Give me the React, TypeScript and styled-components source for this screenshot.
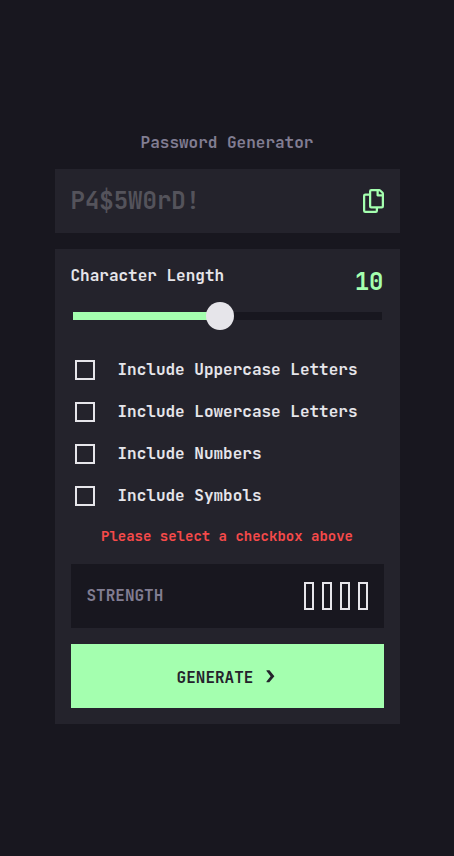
import React, { useState } from "react";
import styled, { createGlobalStyle } from "styled-components";

const colors = {
  page: "#18171f",
  panel: "#24232c",
  muted: "#817d92",
  faint: "#54535b",
  text: "#e6e5ea",
  accent: "#a4ffaf",
  error: "#f64a4a",
};

const MIN_LENGTH = 1;
const MAX_LENGTH = 20;
const THUMB = 28;

const GlobalStyle = createGlobalStyle`
  *, *::before, *::after { box-sizing: border-box; }
  body {
    margin: 0;
    background: ${colors.page};
    color: ${colors.text};
  }
  body, input, button {
    font-family: "JetBrains Mono", "DejaVu Sans Mono", "Liberation Mono", monospace;
    font-size: 16px;
    font-weight: 700;
    line-height: 21px;
  }
`;

const Page = styled.main`
  min-height: 100vh;
  display: flex;
  align-items: center;
  justify-content: center;
  padding: 16px;
`;

const Generator = styled.div`
  width: 100%;
  max-width: 345px;
  display: flex;
  flex-direction: column;
  gap: 16px;
`;

const Title = styled.h1`
  margin: 0;
  font-size: 16px;
  line-height: 21px;
  text-align: center;
  color: ${colors.muted};
`;

const PasswordBar = styled.div`
  display: flex;
  align-items: center;
  gap: 16px;
  height: 64px;
  padding: 0 16px;
  background: ${colors.panel};
`;

const PasswordField = styled.input`
  flex: 1;
  min-width: 0;
  height: 32px;
  padding: 0;
  border: 0;
  outline: 0;
  background: transparent;
  color: ${colors.text};
  font-size: 24px;
  line-height: 32px;

  &::placeholder {
    color: ${colors.faint};
    opacity: 1;
  }
`;

const CopyButton = styled.button`
  display: flex;
  padding: 0;
  border: 0;
  background: transparent;
  color: ${colors.accent};
  cursor: pointer;
`;

const Settings = styled.form`
  display: flex;
  flex-direction: column;
  padding: 16px;
  background: ${colors.panel};
`;

const LengthHeader = styled.div`
  display: flex;
  justify-content: space-between;
  align-items: flex-start;
`;

const LengthValue = styled.output`
  font-size: 24px;
  line-height: 34px;
  color: ${colors.accent};
`;

const Slider = styled.input`
  appearance: none;
  height: 8px;
  margin: 13px 2px 39px;
  cursor: pointer;
  background: linear-gradient(
    to right,
    ${colors.accent} var(--fill),
    ${colors.page} var(--fill)
  );

  &::-webkit-slider-thumb {
    appearance: none;
    width: ${THUMB}px;
    height: ${THUMB}px;
    border-radius: 50%;
    background: ${colors.text};
  }
  &::-moz-range-thumb {
    width: ${THUMB}px;
    height: ${THUMB}px;
    border: 0;
    border-radius: 50%;
    background: ${colors.text};
  }
`;

const Options = styled.div`
  display: flex;
  flex-direction: column;
  gap: 20px;
`;

const Option = styled.label`
  display: flex;
  align-items: center;
  gap: 23px;
  height: 22px;
  padding-left: 4px;
  line-height: 22px;
  cursor: pointer;
`;

const Checkbox = styled.input`
  appearance: none;
  flex: none;
  display: grid;
  place-items: center;
  width: 20px;
  height: 20px;
  margin: 0;
  border: 2px solid ${colors.text};
  cursor: pointer;

  &:checked {
    border-color: ${colors.accent};
    background: ${colors.accent};
  }
  &:checked::before {
    content: "";
    width: 6px;
    height: 11px;
    border: solid ${colors.page};
    border-width: 0 2px 2px 0;
    transform: rotate(45deg);
  }
`;

const Message = styled.p`
  margin: 19px 0 18px;
  min-height: 20px;
  font-size: 14px;
  line-height: 20px;
  text-align: center;
  color: ${colors.error};
`;

const Strength = styled.div`
  display: flex;
  align-items: center;
  justify-content: space-between;
  height: 64px;
  padding: 0 16px;
  line-height: 22px;
  background: ${colors.page};
  color: ${colors.muted};
`;

const Meter = styled.div`
  display: flex;
  gap: 8px;
`;

const Bar = styled.span<{ $on: boolean }>`
  width: 10px;
  height: 28px;
  border: 2px solid ${(p) => (p.$on ? colors.accent : colors.text)};
  background: ${(p) => (p.$on ? colors.accent : "transparent")};
`;

const GenerateButton = styled.button`
  display: flex;
  align-items: center;
  justify-content: center;
  gap: 13px;
  height: 64px;
  margin-top: 16px;
  padding: 2px 2px 0 0;
  border: 0;
  background: ${colors.accent};
  color: ${colors.panel};
  cursor: pointer;
`;

const CopyIcon = () => (
  <svg width="21" height="24" viewBox="0 0 21 24" fill="currentColor" aria-hidden="true">
    <path d="M20.341 3.091 17.909.659A2.25 2.25 0 0 0 16.319 0H8.25A2.25 2.25 0 0 0 6 2.25V4.5H2.25A2.25 2.25 0 0 0 0 6.75v15A2.25 2.25 0 0 0 2.25 24h10.5A2.25 2.25 0 0 0 15 21.75V19.5h3.75A2.25 2.25 0 0 0 21 17.25V4.682a2.25 2.25 0 0 0-.659-1.591ZM12.469 21.75H2.53a.281.281 0 0 1-.281-.281V7.03a.281.281 0 0 1 .281-.281H6v10.5a2.25 2.25 0 0 0 2.25 2.25h4.5v1.969a.282.282 0 0 1-.281.281Zm6-4.5H8.53a.281.281 0 0 1-.281-.281V2.53a.281.281 0 0 1 .281-.281H13.5v4.125c0 .621.504 1.125 1.125 1.125h4.125v9.469a.282.282 0 0 1-.281.281Zm.281-12h-3v-3h.451c.075 0 .147.03.2.082L18.667 4.6a.283.283 0 0 1 .083.199v.451Z" />
  </svg>
);

const ChevronIcon = () => (
  <svg width="9" height="14" viewBox="0 0 9 14" fill="currentColor" aria-hidden="true">
    <path d="M0.5 0.3H3.5L8.4 6.2L3.3 12.2H0.5V11.4L4.6 6.2L0.5 1.1Z" />
  </svg>
);

const options = [
  { id: "uppercase", label: "Include Uppercase Letters", chars: "ABCDEFGHIJKLMNOPQRSTUVWXYZ" },
  { id: "lowercase", label: "Include Lowercase Letters", chars: "abcdefghijklmnopqrstuvwxyz" },
  { id: "numbers", label: "Include Numbers", chars: "0123456789" },
  { id: "symbols", label: "Include Symbols", chars: "!@#$%^&*()-_=+?" },
];

export default function App() {
  const [length, setLength] = useState(10);
  const [selected, setSelected] = useState<string[]>([]);
  const [password, setPassword] = useState("");

  const ratio = (length - MIN_LENGTH) / (MAX_LENGTH - MIN_LENGTH);
  const fill = `calc(${THUMB / 2}px + (100% - ${THUMB}px) * ${ratio})`;

  const toggle = (id: string) =>
    setSelected((prev) => (prev.includes(id) ? prev.filter((x) => x !== id) : [...prev, id]));

  const generate = (event: React.FormEvent) => {
    event.preventDefault();
    const pool = options
      .filter((o) => selected.includes(o.id))
      .map((o) => o.chars)
      .join("");
    if (!pool) return;
    setPassword(
      Array.from({ length }, () => pool[Math.floor(Math.random() * pool.length)]).join("")
    );
  };

  return (
    <>
      <GlobalStyle />
      <Page>
        <Generator>
          <Title>Password Generator</Title>
          <PasswordBar>
            <PasswordField
              type="text"
              aria-label="Generated password"
              placeholder="P4$5W0rD!"
              value={password}
              readOnly
            />
            <CopyButton
              type="button"
              aria-label="Copy password"
              onClick={() => navigator.clipboard?.writeText(password)}
            >
              <CopyIcon />
            </CopyButton>
          </PasswordBar>

          <Settings onSubmit={generate}>
            <LengthHeader>
              <label htmlFor="length">Character Length</label>
              <LengthValue htmlFor="length">{length}</LengthValue>
            </LengthHeader>
            <Slider
              id="length"
              type="range"
              min={MIN_LENGTH}
              max={MAX_LENGTH}
              value={length}
              onChange={(e) => setLength(Number(e.target.value))}
              style={{ "--fill": fill } as React.CSSProperties}
            />
            <Options>
              {options.map((o) => (
                <Option key={o.id} htmlFor={o.id}>
                  <Checkbox
                    id={o.id}
                    type="checkbox"
                    checked={selected.includes(o.id)}
                    onChange={() => toggle(o.id)}
                  />
                  {o.label}
                </Option>
              ))}
            </Options>
            <Message role="alert">
              {selected.length === 0 ? "Please select a checkbox above" : ""}
            </Message>
            <Strength>
              <span>STRENGTH</span>
              <Meter>
                {options.map((o, i) => (
                  <Bar key={o.id} $on={i < selected.length} />
                ))}
              </Meter>
            </Strength>
            <GenerateButton type="submit">
              GENERATE
              <ChevronIcon />
            </GenerateButton>
          </Settings>
        </Generator>
      </Page>
    </>
  );
}
